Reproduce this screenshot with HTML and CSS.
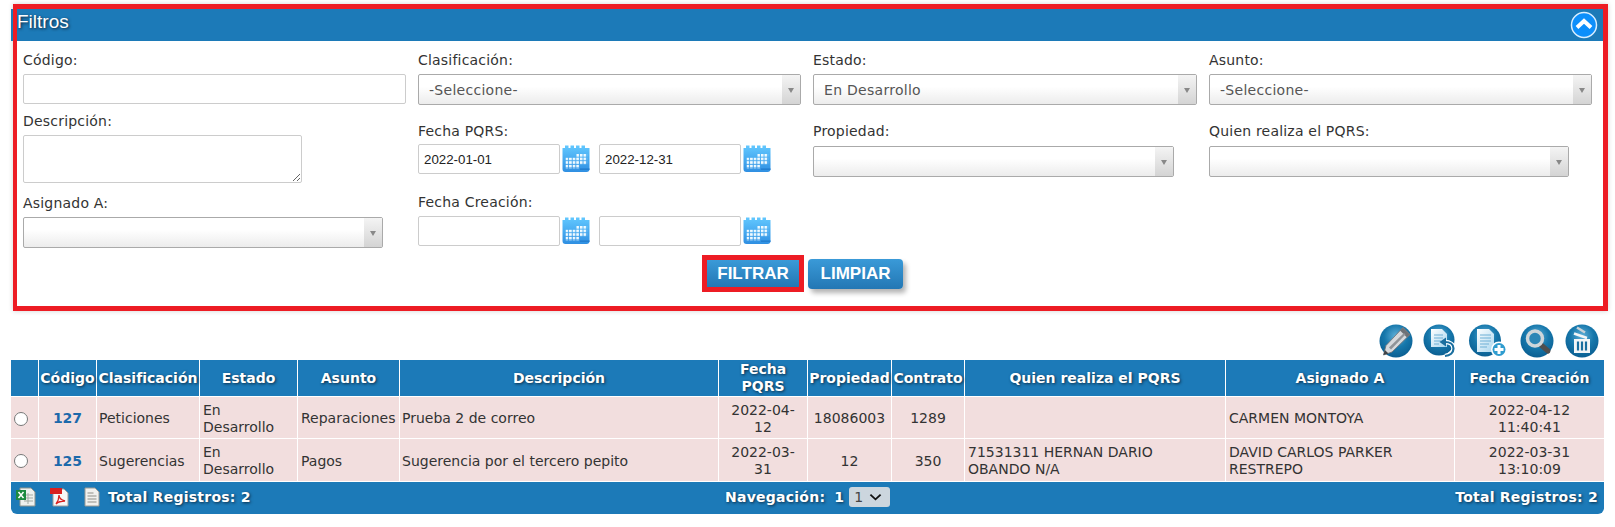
FILE: index.html
```html
<!DOCTYPE html>
<html lang="es">
<head>
<meta charset="utf-8">
<title>Filtros</title>
<link rel="stylesheet" href="styles.css">
</head>
<body>
<svg class="defs" aria-hidden="true">
  <defs>
    <radialGradient id="glossy" cx="50%" cy="35%" r="65%">
      <stop offset="0" stop-color="#5fb0d8"/>
      <stop offset="0.55" stop-color="#1677ab"/>
      <stop offset="1" stop-color="#0b5f92"/>
    </radialGradient>
    <linearGradient id="calfill" x1="0" y1="0" x2="0" y2="1">
      <stop offset="0" stop-color="#62c8ff"/>
      <stop offset="1" stop-color="#2f8fe2"/>
    </linearGradient>
    <linearGradient id="docfill" x1="0" y1="0" x2="1" y2="1">
      <stop offset="0" stop-color="#ffffff"/>
      <stop offset="1" stop-color="#a9d6ee"/>
    </linearGradient>
    <pattern id="caldots" width="3.6" height="3.6" patternUnits="userSpaceOnUse" x="3.5" y="9">
      <rect width="2.6" height="2.6" fill="#f2fbff"/>
    </pattern>
    <symbol id="cal" viewBox="0 0 28 28">
      <path d="M3 .5h3.500v2.500h2V.5h3.500v2.500h2V.5h3.500v2.500h2V.5h3.500v2.500H27.500v21a3 3 0 0 1-3 3h-21a3 3 0 0 1-3-3V3H3z" fill="url(#calfill)"/>
      <path d="M14.300 9H25.100V19.800H17.900V23.400H3.500V12.600H14.300z" fill="url(#caldots)"/>
      <path d="M17.900 23.400H27.500V25H17.900z" fill="#237fd0"/>
    </symbol>
  </defs>
</svg>

<main class="page">
  <section class="panel">
    <header class="panel-head">
      <h1 class="panel-title">Filtros</h1>
      <svg class="collapse" viewBox="0 0 28 28" aria-hidden="true">
        <circle cx="14" cy="14" r="12.500" fill="#0d8ffb" stroke="#d9eeff" stroke-width="1.500"/>
        <path d="M7 16.500 14 10l7 6.500" fill="none" stroke="#fff" stroke-width="4"/>
      </svg>
    </header>
    <form class="panel-body">
      <div class="fields">
        <div class="col">
          <div class="field f-code">
            <label class="lbl">Código:</label>
            <input class="input w-code" type="text">
          </div>
          <div class="field f-desc">
            <label class="lbl">Descripción:</label>
            <textarea class="area"></textarea>
          </div>
          <div class="field f-asig">
            <label class="lbl">Asignado A:</label>
            <div class="select w-asig"><span class="sel-val"></span><span class="sel-btn"></span></div>
          </div>
        </div>
        <div class="col">
          <div class="field">
            <label class="lbl">Clasificación:</label>
            <div class="select w-full"><span class="sel-val">-Seleccione-</span><span class="sel-btn"></span></div>
          </div>
          <div class="field f-second">
            <label class="lbl">Fecha PQRS:</label>
            <div class="dates dates-up">
              <input class="input date" type="text" value="2022-01-01">
              <svg class="calicon"><use href="#cal"/></svg>
              <input class="input date" type="text" value="2022-12-31">
              <svg class="calicon"><use href="#cal"/></svg>
            </div>
          </div>
          <div class="field f-third">
            <label class="lbl">Fecha Creación:</label>
            <div class="dates">
              <input class="input date" type="text">
              <svg class="calicon"><use href="#cal"/></svg>
              <input class="input date" type="text">
              <svg class="calicon"><use href="#cal"/></svg>
            </div>
          </div>
        </div>
        <div class="col col-wide">
          <div class="field">
            <label class="lbl">Estado:</label>
            <div class="select w-full"><span class="sel-val">En Desarrollo</span><span class="sel-btn"></span></div>
          </div>
          <div class="field f-second">
            <label class="lbl">Propiedad:</label>
            <div class="select w-short sel-low"><span class="sel-val"></span><span class="sel-btn"></span></div>
          </div>
        </div>
        <div class="col">
          <div class="field">
            <label class="lbl">Asunto:</label>
            <div class="select w-full"><span class="sel-val">-Seleccione-</span><span class="sel-btn"></span></div>
          </div>
          <div class="field f-second">
            <label class="lbl">Quien realiza el PQRS:</label>
            <div class="select w-short sel-low"><span class="sel-val"></span><span class="sel-btn"></span></div>
          </div>
        </div>
      </div>
      <div class="actions">
        <span class="mark"><button class="btn" type="button">FILTRAR</button></span>
        <button class="btn btn-shadow" type="button">LIMPIAR</button>
      </div>
    </form>
  </section>

  <div class="toolbar">
    <svg class="tool" viewBox="0 0 34 34" aria-hidden="true">
      <circle cx="17" cy="17" r="16.500" fill="url(#glossy)"/>
      <path d="M24 3.500 31 10.500 13 28 4.500 31 7 21.500z" fill="#d6d9dc" stroke="#6d7074" stroke-width=".8"/>
      <path d="M24 3.500 31 10.500 28 13.500 21 6.500z" fill="#6f7276"/>
      <path d="M10 23.500 25 9 26.500 10.500 12 25.500z" fill="#8f9397"/>
      <path d="M4.500 31 5.800 26 9.500 29.500z" fill="#3f4245"/>
    </svg>
    <svg class="tool" viewBox="0 0 34 34" aria-hidden="true">
      <circle cx="16" cy="16" r="15.500" fill="url(#glossy)"/>
      <path d="M8 5h11l5 5v13H8z" fill="url(#docfill)"/>
      <path d="M11 11h9M11 14h9M11 17h7M11 20h5" stroke="#6fb0d6" stroke-width="1.200"/>
      <path d="M22 18c5 0 8.500 2.500 8.500 6.500S27 31.500 22 32" fill="none" stroke="#fff" stroke-width="4.500"/>
      <path d="M22 18c5 0 8.500 2.500 8.500 6.500S27 31.500 22 32" fill="none" stroke="#1b6f9f" stroke-width="2.200"/>
      <path d="M16.500 18 23 13.500v9z" fill="#1b6f9f"/>
    </svg>
    <svg class="tool tool-wide" viewBox="0 0 40 34" aria-hidden="true">
      <circle cx="17" cy="16.500" r="16" fill="url(#glossy)"/>
      <path d="M9 5h12l5 5v18H9z" fill="url(#docfill)"/>
      <path d="M12 11h11M12 14h11M12 17h11M12 20h9M12 23h7" stroke="#6fb0d6" stroke-width="1.200"/>
      <circle cx="31" cy="25.500" r="8" fill="#fff"/>
      <circle cx="31" cy="25.500" r="6.500" fill="#2f9ccf"/>
      <path d="M31 21v9M26.500 25.500h9" stroke="#fff" stroke-width="3"/>
    </svg>
    <svg class="tool" viewBox="0 0 34 34" aria-hidden="true">
      <circle cx="17" cy="17" r="16.500" fill="url(#glossy)"/>
      <path d="M20.500 20.500 28 27" stroke="#4f4f4f" stroke-width="5" stroke-linecap="round"/>
      <circle cx="15" cy="14.500" r="7.500" fill="#2d86b6" stroke="#cfd6da" stroke-width="3.500"/>
    </svg>
    <svg class="tool" viewBox="0 0 34 34" aria-hidden="true">
      <circle cx="17" cy="17" r="16.500" fill="url(#glossy)"/>
      <path d="M9 15h16v14H9z" fill="#f4f6f7"/>
      <path d="M13 17.500v9M17 17.500v9M21 17.500v9" stroke="#1b6f9f" stroke-width="2.200"/>
      <path d="M9 9.500 22 14" stroke="#f4f6f7" stroke-width="2.500"/>
      <path d="M12 3.500 20 8.500" stroke="#c9d2d8" stroke-width="2.500"/>
    </svg>
  </div>

  <table class="grid">
    <colgroup>
      <col class="c-a"><col class="c-b"><col class="c-c"><col class="c-d"><col class="c-e"><col class="c-f">
      <col class="c-g"><col class="c-h"><col class="c-i"><col class="c-j"><col class="c-k"><col class="c-l">
    </colgroup>
    <thead>
      <tr>
        <th></th><th>Código</th><th>Clasificación</th><th>Estado</th><th>Asunto</th><th>Descripción</th>
        <th>Fecha PQRS</th><th>Propiedad</th><th>Contrato</th><th>Quien realiza el PQRS</th><th>Asignado A</th><th>Fecha Creación</th>
      </tr>
    </thead>
    <tbody>
      <tr class="row-a">
        <td class="ctr"><input class="radio" type="radio" name="sel"></td>
        <td class="ctr"><a class="code" href="#">127</a></td>
        <td class="tight">Peticiones</td><td>En Desarrollo</td><td>Reparaciones</td><td class="tight">Prueba 2 de correo</td>
        <td class="ctr">2022-04-<br>12</td><td class="ctr">18086003</td><td class="ctr">1289</td>
        <td></td><td>CARMEN MONTOYA</td><td class="ctr">2022-04-12 11:40:41</td>
      </tr>
      <tr class="row-b">
        <td class="ctr"><input class="radio" type="radio" name="sel"></td>
        <td class="ctr"><a class="code" href="#">125</a></td>
        <td class="tight">Sugerencias</td><td>En Desarrollo</td><td>Pagos</td><td class="tight">Sugerencia por el tercero pepito</td>
        <td class="ctr">2022-03-<br>31</td><td class="ctr">12</td><td class="ctr">350</td>
        <td>71531311 HERNAN DARIO<br>OBANDO N/A</td><td>DAVID CARLOS PARKER RESTREPO</td><td class="ctr">2022-03-31 13:10:09</td>
      </tr>
    </tbody>
  </table>

  <footer class="foot">
    <div class="foot-left">
      <svg class="exp exp-xls" viewBox="0 0 20 20" aria-hidden="true">
        <path d="M4 1h11l4 4v14H4z" fill="#eef0ee" stroke="#8d938d"/>
        <path d="M8 8h9M8 11h9M8 14h9M12 6v11" stroke="#a3aaa3"/>
        <path d="M0 3h10v10H0z" fill="#1d8a3f"/>
        <path d="M2.500 5 7.500 11M7.500 5 2.500 11" stroke="#fff" stroke-width="1.500"/>
      </svg>
      <svg class="exp exp-pdf" viewBox="0 0 20 20" aria-hidden="true">
        <path d="M3 2h11l4 4v13H3z" fill="#f6f6f6" stroke="#9c9c9c"/>
        <path d="M0 1h12v6H0z" fill="#d9201f"/>
        <path d="M6 17c3-4 3-7 3-9 0 3 2 5 6 6-4 0-7 1-9 3z" fill="none" stroke="#d9201f" stroke-width="1.300"/>
      </svg>
      <svg class="exp exp-doc" viewBox="0 0 16 20" aria-hidden="true">
        <path d="M1 1h10l4 4v14H1z" fill="#f1f1ee" stroke="#9a9a94"/>
        <path d="M3.500 6h6M3.500 9h9M3.500 12h9M3.500 15h9" stroke="#8f8f88"/>
      </svg>
      <span class="foot-text">Total Registros: 2</span>
    </div>
    <div class="foot-nav">
      <span class="foot-text">Navegación:</span>
      <span class="foot-text">1</span>
      <span class="pager">1<svg class="chev" viewBox="0 0 14 8" aria-hidden="true"><path d="M1.500 1.500 7 6.500l5.500-5" fill="none" stroke="#111" stroke-width="2"/></svg></span>
    </div>
    <span class="foot-text">Total Registros: 2</span>
  </footer>
</main>
</body>
</html>
```

FILE: styles.css
```css
* { box-sizing: border-box; }
html, body { margin: 0; padding: 0; }
body {
  background: #fff;
  color: #333;
  font-family: "DejaVu Sans", Verdana, sans-serif;
  font-size: 14px;
  height: 527px;
  overflow: hidden;
}
.defs { display: block; width: 0; height: 0; overflow: hidden; }
.page { padding: 4px 7px 0 11px; }

/* Filter panel */
.panel {
  position: relative;
  margin-left: 2px;
  height: 307px;
  border: 5px solid #ed1c24;
  border-left-width: 4px;
  background: #fff;
  box-shadow: 0 0 5px rgba(0, 0, 0, .18);
}
.panel::before {
  content: "";
  position: absolute;
  left: -6px;
  top: 0;
  width: 2px;
  height: 32px;
  background: #1c7ab8;
}
.panel-head {
  display: flex;
  align-items: center;
  justify-content: space-between;
  height: 32px;
  padding: 0 5px 0 0;
  background: #1c7ab8;
}
.panel-title {
  margin: 0 0 7px;
  color: #fff;
  font: 400 19px "Liberation Sans", Arial, sans-serif;
  text-shadow: 1px 1px 3px #123;
}
.collapse { width: 28px; height: 28px; }
.panel-body { padding: 11px 0 0 6px; }
.fields { display: flex; height: 203px; }
.col { width: 395px; flex: none; }
.col-wide { width: 396px; }
.field { display: flex; flex-direction: column; }
.lbl { display: block; height: 16px; line-height: 16px; margin-bottom: 6px; color: #333; letter-spacing: .2px; }
.f-desc { margin-top: 9px; }
.f-asig { margin-top: 12px; }
.f-second { margin-top: 18px; }
.f-third { margin-top: 20px; }

.input {
  display: block;
  height: 30px;
  padding: 0 10px;
  border: 1px solid #ccc;
  border-radius: 2px;
  background: #fff;
  font: 13.300px "Liberation Sans", Arial, sans-serif;
  color: #222;
  outline: 0;
}
.w-code { width: 383px; }
.area {
  display: block;
  width: 279px;
  height: 48px;
  border: 1px solid #ccc;
  border-radius: 2px;
  background: #fff;
  resize: both;
  outline: 0;
}
.select {
  display: flex;
  height: 31px;
  border: 1px solid #aaa;
  border-radius: 2px;
  background: linear-gradient(#fff 40%, #ececec);
  color: #555;
  letter-spacing: .28px;
}
.sel-val { flex: 1; padding-left: 10px; line-height: 31px; }
.sel-btn {
  position: relative;
  width: 18px;
  background: linear-gradient(#f4f4f4, #d4d4d4);
}
.sel-btn::after {
  content: "";
  position: absolute;
  left: 6px;
  top: 13px;
  border: 3.500px solid transparent;
  border-top: 5px solid #888;
  border-bottom: 0;
}
.sel-low { margin-top: 1px; }
.w-full { width: 383px; }
.w-short { width: 360px; }
.w-asig { width: 360px; }
.col-wide .w-full { width: 384px; }
.col-wide .w-short { width: 361px; }
.dates { display: flex; align-items: center; }
.dates-up { margin-top: -1px; }
.date { width: 142px; padding: 0 5px; }
.calicon { width: 28px; height: 28px; margin: 0 9px 0 2px; flex: none; }

.actions {
  display: flex;
  align-items: center;
  gap: 4px;
  padding-left: 679px;
  height: 37px;
}
.mark { display: block; border: 5px solid #ed1c24; }
.btn {
  display: block;
  height: 27px;
  width: 92px;
  padding: 0;
  border: 0;
  color: #fff;
  background: linear-gradient(#3a9ad8, #2377b4);
  font: 700 17px "Liberation Sans", Arial, sans-serif;
}
.btn-shadow {
  width: 95px;
  height: 30px;
  border-radius: 4px;
  box-shadow: 3px 4px 5px rgba(0, 0, 0, .3);
}

/* Toolbar */
.toolbar {
  display: flex;
  justify-content: flex-end;
  gap: 10px;
  height: 34px;
  margin-top: 13px;
  padding-right: 9px;
}
.tool { width: 34px; height: 34px; }
.tool-wide { width: 40px; }
.toolbar .tool:nth-child(4) { margin-left: 2px; }
.toolbar .tool:nth-child(3) { margin-left: 1px; }
.toolbar .tool:nth-child(5) { margin-left: 1px; }

/* Table */
.grid {
  width: 1593px;
  margin-top: 2px;
  table-layout: fixed;
  border-collapse: separate;
  border-spacing: 0;
}
.c-a { width: 28px; } .c-b { width: 58px; } .c-c { width: 103px; } .c-d { width: 98px; }
.c-e { width: 102px; } .c-f { width: 319px; } .c-g { width: 89px; } .c-h { width: 84px; }
.c-i { width: 73px; } .c-j { width: 261px; } .c-k { width: 229px; } .c-l { width: 149px; }
.grid th, .grid td {
  border-right: 1px solid #fff;
  border-bottom: 1px solid #fff;
  padding: 0 3px;
  line-height: 17px;
}
.grid th:last-child, .grid td:last-child { border-right: 0; }
.grid th {
  height: 37px;
  padding: 0;
  background: #1c7ab8;
  color: #fff;
  font-weight: 700;
  text-align: center;
  text-shadow: 1px 1px 3px #0a2b44;
}
.grid td {
  padding-top: 2px;
  background: #f2dede;
  color: #333;
}
.grid td.tight { padding-left: 2px; }
.row-a td { height: 42px; }
.row-b td { height: 43px; }
.grid td.ctr { text-align: center; }
.code { color: #1c69ab; font-weight: 700; text-decoration: none; }
.radio { display: block; width: 14px; height: 14px; margin: 0 auto 0 0; }

/* Footer bar */
.foot {
  display: flex;
  align-items: center;
  justify-content: space-between;
  width: 1593px;
  height: 32px;
  padding: 0 6px 2px 5px;
  background: #1c7ab8;
  border-radius: 0 0 6px 6px;
}
.foot-left { display: flex; align-items: center; width: 709px; flex: none; }
.foot-nav { display: flex; align-items: center; gap: 9px; flex: 1; }
.foot-text {
  color: #fff;
  font-weight: 700;
  letter-spacing: .25px;
  text-shadow: 1px 1px 3px #0a2b44;
}
.exp { height: 20px; flex: none; }
.exp-xls { width: 20px; }
.exp-pdf { width: 20px; margin-left: 14px; }
.exp-doc { width: 16px; margin-left: 14px; margin-right: 8px; }
.pager {
  display: flex;
  align-items: center;
  gap: 6px;
  width: 41px;
  height: 20px;
  margin-left: -4px;
  padding-left: 5px;
  background: #ccd6de;
  border-radius: 3px;
  color: #444;
}
.chev { width: 13px; height: 8px; }
```
